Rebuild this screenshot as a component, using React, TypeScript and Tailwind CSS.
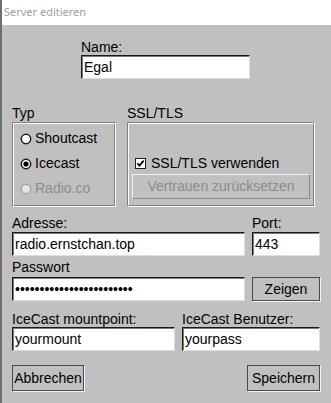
const inputCls =
    "block h-6 w-full bg-white px-[2px] text-[14px] text-black outline-none border border-t-[#1a1a1a] border-l-[#1a1a1a] border-r-[#dedede] border-b-[#dedede] shadow-[inset_1px_1px_0_#7a7a7a]";

function Field({ value, type = "text" }: { value: string; type?: string }) {
    return <input type={type} defaultValue={value} readOnly className={inputCls} />;
}

function Label({ children }: { children: React.ReactNode }) {
    return <div className="h-4 leading-4 whitespace-nowrap">{children}</div>;
}

function Button({ children, className = "" }: { children: React.ReactNode; className?: string }) {
    return (
        <button
            className={
                "flex items-center justify-center bg-[#c0c0c0] text-[14px] text-black border border-[#4a4a4a] shadow-[1px_1px_0_#f4f4f4] " +
                className
            }
        >
            {children}
        </button>
    );
}

function Etched({ children, className = "" }: { children: React.ReactNode; className?: string }) {
    return (
        <div className="h-[85px] border border-t-[#808080] border-l-[#808080] border-r-white border-b-white">
            <div className={"h-full border border-t-white border-l-white border-r-[#808080] border-b-[#808080] " + className}>
                {children}
            </div>
        </div>
    );
}

function Radio({ label, checked = false, disabled = false }: { label: string; checked?: boolean; disabled?: boolean }) {
    return (
        <div className={"flex h-[25px] items-center " + (disabled ? "text-[#8c8c8c]" : "text-black")}>
            <svg width="12" height="12" viewBox="0 0 12 12" className="ml-[6px] mr-[3px]">
                <circle
                    cx="6"
                    cy="6"
                    r="4.7"
                    fill={disabled ? "#e6e6e6" : "#ffffff"}
                    stroke={disabled ? "#a6a6a6" : "#1e1e1e"}
                    strokeWidth="1.5"
                />
                {checked && <circle cx="6" cy="6" r="2.6" fill="#000" />}
            </svg>
            <span>{label}</span>
        </div>
    );
}

export default function App() {
    const dots = "•".repeat(24);
    return (
        <div className="flex h-[403px] w-[331px] flex-col border-l-2 border-[#6e6e6e] bg-[#c0c0c0] font-['Liberation_Sans',Arial,sans-serif] text-[14px] text-black">
            <div className="flex h-[25px] items-center bg-white pl-[2px] font-['Noto_Sans',sans-serif] text-[11px] text-[#a0a0a0]">
                Server editieren
            </div>

            <div className="flex flex-1 flex-col pl-[10px] pr-[11px]">
                {/* Name */}
                <div className="ml-[69px] mt-[14px] w-[169px]">
                    <Label>Name:</Label>
                    <Field value="Egal" />
                </div>

                {/* Typ + SSL */}
                <div className="mt-[26px] flex gap-[11px]">
                    <div className="w-[104px]">
                        <div className="h-[17px] leading-4">Typ</div>
                        <Etched className="pt-[2px]">
                            <Radio label="Shoutcast" />
                            <Radio label="Icecast" checked />
                            <Radio label="Radio.co" disabled />
                        </Etched>
                    </div>
                    <div className="w-[188px]">
                        <div className="h-[17px] leading-4">SSL/TLS</div>
                        <Etched className="flex flex-col justify-end px-[3px] pb-[6px]">
                            <div className="flex h-[22px] items-center">
                                <svg width="11" height="11" viewBox="0 0 11 11" className="ml-[3px] mr-[5px]">
                                    <rect x="0.5" y="0.5" width="10" height="10" fill="#fff" stroke="#202020" />
                                    <path d="M2.3 5.3 L4.4 7.6 L8.7 2.6" fill="none" stroke="#000" strokeWidth="1.7" />
                                </svg>
                                <span>SSL/TLS verwenden</span>
                            </div>
                            <div className="flex h-[25px] items-center justify-center border border-t-[#f2f2f2] border-l-[#f2f2f2] border-r-[#8a8a8a] border-b-[#8a8a8a] text-[#8c8c8c]">
                                Vertrauen zurücksetzen
                            </div>
                        </Etched>
                    </div>
                </div>

                {/* Adresse + Port */}
                <div className="mt-[8px] flex gap-[7px]">
                    <div className="w-[233px]">
                        <div className="mb-[1px]">
                            <Label>Adresse:</Label>
                        </div>
                        <Field value="radio.ernstchan.top" />
                    </div>
                    <div className="flex-1">
                        <div className="mb-[1px]">
                            <Label>Port:</Label>
                        </div>
                        <Field value="443" />
                    </div>
                </div>

                {/* Passwort */}
                <div className="mt-[3px]">
                    <div className="mb-[2px]">
                        <Label>Passwort</Label>
                    </div>
                    <div className="flex gap-[7px]">
                        <div className="w-[233px]">
                            <input readOnly defaultValue={dots} className={inputCls} />
                        </div>
                        <Button className="h-6 flex-1">Zeigen</Button>
                    </div>
                </div>

                {/* IceCast */}
                <div className="mt-[10px] flex gap-[7px]">
                    <div className="w-[163px]">
                        <Label>IceCast mountpoint:</Label>
                        <Field value="yourmount" />
                    </div>
                    <div className="flex-1">
                        <Label>IceCast Benutzer:</Label>
                        <Field value="yourpass" />
                    </div>
                </div>

                {/* Buttons */}
                <div className="mt-[14px] flex justify-between">
                    <Button className="h-[26px] w-[72px]">Abbrechen</Button>
                    <Button className="h-[26px] w-[73px]">Speichern</Button>
                </div>
            </div>
        </div>
    );
}
